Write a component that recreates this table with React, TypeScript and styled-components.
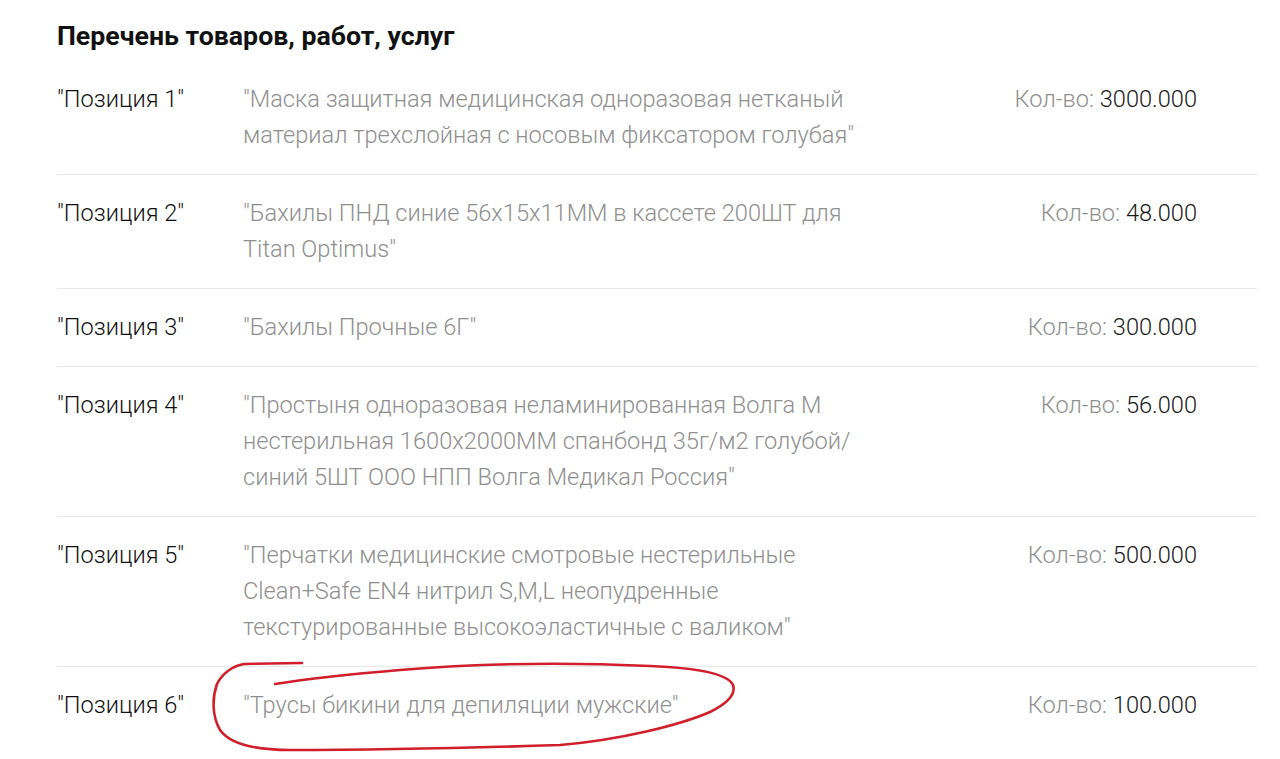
import React from "react";
import styled, { createGlobalStyle } from "styled-components";

const Global = createGlobalStyle`
  html, body { margin: 0; padding: 0; background: #ffffff; }
  body { font-family: Roboto, "Noto Sans", "Liberation Sans", sans-serif; }
`;

const Page = styled.div`
  position: relative;
  width: 1280px;
  height: 759px;
  overflow: hidden;
  box-sizing: border-box;
  padding: 21px 23px 0 57px;
`;

const Title = styled.h2`
  margin: 0 0 9px 0;
  font-size: 26.7px;
  line-height: 31px;
  font-weight: 700;
  color: #111111;
`;

const Row = styled.div<{ $last?: boolean }>`
  display: grid;
  grid-template-columns: 186px 640px 1fr;
  padding: 20px 60px 21px 0;
  border-bottom: ${(p) => (p.$last ? "none" : "1px solid #e8e8e8")};
  font-size: 23.6px;
  font-weight: 300;
  line-height: 36px;
`;

const Label = styled.div`
  color: #111111;
  white-space: nowrap;
`;

const Desc = styled.div`
  color: #8f8f8f;
`;

const Qty = styled.div`
  text-align: right;
  color: #1a1a1a;
  white-space: nowrap;
`;

const QtyLabel = styled.span`
  color: #8f8f8f;
  margin-right: 0.25em;
`;

const Annotation = styled.svg`
  position: absolute;
  left: 0;
  top: 0;
  pointer-events: none;
`;

const items = [
  { n: 1, d: "Маска защитная медицинская одноразовая нетканый материал трехслойная с носовым фиксатором голубая", q: "3000.000" },
  { n: 2, d: "Бахилы ПНД синие 56x15x11ММ в кассете 200ШТ для Titan Optimus", q: "48.000" },
  { n: 3, d: "Бахилы Прочные 6Г", q: "300.000" },
  { n: 4, d: "Простыня одноразовая неламинированная Волга М нестерильная 1600x2000ММ спанбонд 35г/м2 голубой/\u200Bсиний 5ШТ ООО НПП Волга Медикал Россия", q: "56.000" },
  { n: 5, d: "Перчатки медицинские смотровые нестерильные Clean+Safe EN4 нитрил S,M,L неопудренные текстурированные высокоэластичные с валиком", q: "500.000" },
  { n: 6, d: "Трусы бикини для депиляции мужские", q: "100.000" },
];

export default function App() {
  return (
    <>
      <Global />
      <Page>
        <Title>Перечень товаров, работ, услуг</Title>
        {items.map((it, i) => (
          <Row key={it.n} $last={i === items.length - 1}>
            <Label>{`"Позиция ${it.n}"`}</Label>
            <Desc>{`"${it.d}"`}</Desc>
            <Qty>
              <QtyLabel>Кол-во:</QtyLabel>
              {it.q}
            </Qty>
          </Row>
        ))}
        <Annotation width="1280" height="759" viewBox="0 0 1280 759">
          <path
            d="M 302 663 L 270 663.5 L 244 664 C 232 666, 222 674, 217 684 C 212 698, 212 716, 220 730 C 230 744, 255 750, 290 750 C 380 750, 500 747, 560 745 C 620 740, 680 725, 710 712 C 728 703, 736 694, 733 685 C 728 674, 700 668, 650 666 C 560 662, 470 664, 400 670 C 340 675, 300 680, 275 684"
            fill="none"
            stroke="#d01f2b"
            strokeWidth="2.6"
            strokeLinecap="round"
            strokeLinejoin="round"
          />
        </Annotation>
      </Page>
    </>
  );
}
